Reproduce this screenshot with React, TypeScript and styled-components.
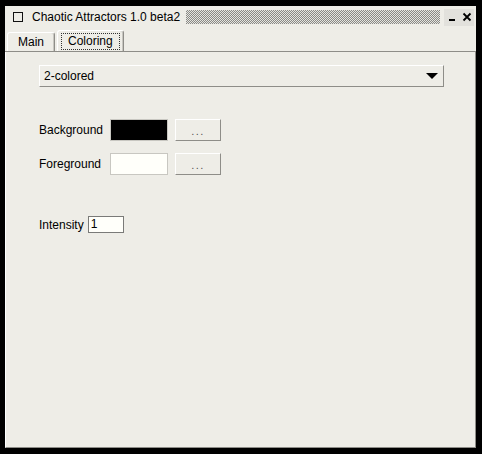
import React from 'react';
import styled, { createGlobalStyle } from 'styled-components';

const Global = createGlobalStyle`
  html, body { margin: 0; padding: 0; background: #000; }
  body { font-family: "Liberation Sans", Arial, sans-serif; font-size: 12px; color: #000; }
`;

const Frame = styled.div`
  width: 482px;
  height: 454px;
  box-sizing: border-box;
  padding: 6px 6px 6px 5px;
  background: #000;
`;

const Win = styled.div`
  height: 100%;
  display: flex;
  flex-direction: column;
  background: #eeede7;
`;

const TitleBar = styled.div`
  height: 22px;
  display: flex;
  align-items: center;
  padding: 0 2px 0 8px;
`;

const WinIcon = styled.div`
  width: 8px;
  height: 8px;
  border: 1.5px solid #111;
  margin-right: 9px;
`;

const Title = styled.div`
  font-size: 12px;
  white-space: nowrap;
`;

const Dots = styled.div`
  flex: 1;
  height: 14px;
  margin: 0 4px 0 6px;
  background: repeating-conic-gradient(#8a8a86 0 25%, #e6e5e0 0 50%) 0 0 / 2px 2px;
`;

const WinBtn = styled.div`
  width: 15px;
  height: 17px;
  display: flex;
  align-items: center;
  justify-content: center;
  background: #e2e1dc;
`;

const TabRow = styled.div`
  height: 23px;
  display: flex;
  align-items: flex-end;
  padding-left: 2px;
  border-bottom: 1px solid #8e8d88;
`;

const Tab = styled.div<{ $active?: boolean }>`
  height: ${p => (p.$active ? 21 : 19)}px;
  padding: 0 ${p => (p.$active ? 3 : 10)}px;
  margin-left: ${p => (p.$active ? 2 : 0)}px;
  display: flex;
  align-items: center;
  box-sizing: border-box;
  border: 1px solid #8e8d88;
  border-bottom: none;
  border-top-color: #ffffff;
  border-left-color: #ffffff;
  box-shadow: inset -1px 0 0 #c8c7c1;
  border-radius: 3px 3px 0 0;
  font-size: 12px;
`;

const Focus = styled.span`
  border: 1px dotted #333;
  padding: 0 6px;
  line-height: 15px;
`;

const Panel = styled.div`
  flex: 1;
  border-left: 1px solid #ffffff;
  border-right: 1px solid #8e8d88;
  border-bottom: 1px solid #8e8d88;
  padding: 13px 31px 0 33px;
`;

const Combo = styled.div`
  height: 22px;
  box-sizing: border-box;
  display: flex;
  align-items: center;
  justify-content: space-between;
  padding: 0 5px 0 4px;
  border: 1px solid #fff;
  border-right-color: #8e8d88;
  border-bottom-color: #8e8d88;
  font-size: 12px;
`;

const Arrow = styled.div`
  width: 0;
  height: 0;
  border-left: 6px solid transparent;
  border-right: 6px solid transparent;
  border-top: 6px solid #000;
`;

const ColorRows = styled.div`
  margin-top: 32px;
  display: flex;
  flex-direction: column;
  gap: 12px;
`;

const Row = styled.div`
  display: flex;
  align-items: center;
`;

const Label = styled.span`
  width: 71px;
  font-size: 12px;
`;

const Swatch = styled.div<{ $color: string }>`
  width: 58px;
  height: 22px;
  box-sizing: border-box;
  background: ${p => p.$color};
  border: 1px solid #c8c7c1;
`;

const DotBtn = styled.div`
  width: 46px;
  height: 22px;
  margin-left: 7px;
  box-sizing: border-box;
  display: flex;
  align-items: center;
  justify-content: center;
  border: 1px solid #fff;
  border-right-color: #8e8d88;
  border-bottom-color: #8e8d88;
  font-size: 11px;
  color: #555;
  letter-spacing: 1.5px;
  padding-top: 2px;
`;

const IntensityRow = styled.div`
  margin-top: 41px;
  display: flex;
  align-items: center;
  gap: 4px;
`;

const Input = styled.div`
  width: 36px;
  height: 17px;
  box-sizing: border-box;
  border: 1px solid #7a7a78;
  background: #fffffa;
  padding-left: 2px;
  font-size: 12px;
  line-height: 15px;
`;

export default function App(): React.ReactElement {
  return (
    <Frame>
      <Global />
      <Win>
        <TitleBar>
          <WinIcon />
          <Title>Chaotic Attractors 1.0 beta2</Title>
          <Dots />
          <WinBtn>
            <svg width="10" height="10" viewBox="0 0 10 10">
              <rect x="2" y="7" width="6" height="2" fill="#000" />
            </svg>
          </WinBtn>
          <WinBtn>
            <svg width="10" height="10" viewBox="0 0 10 10">
              <path d="M1.5 1.5 L8.5 8.5 M8.5 1.5 L1.5 8.5" stroke="#000" strokeWidth="1.8" />
            </svg>
          </WinBtn>
        </TitleBar>
        <TabRow>
          <Tab>Main</Tab>
          <Tab $active>
            <Focus>Coloring</Focus>
          </Tab>
        </TabRow>
        <Panel>
          <Combo>
            <span>2-colored</span>
            <Arrow />
          </Combo>
          <ColorRows>
            <Row>
              <Label>Background</Label>
              <Swatch $color="#000" />
              <DotBtn>...</DotBtn>
            </Row>
            <Row>
              <Label>Foreground</Label>
              <Swatch $color="#fffffa" />
              <DotBtn>...</DotBtn>
            </Row>
          </ColorRows>
          <IntensityRow>
            <span>Intensity</span>
            <Input>1</Input>
          </IntensityRow>
        </Panel>
      </Win>
    </Frame>
  );
}
